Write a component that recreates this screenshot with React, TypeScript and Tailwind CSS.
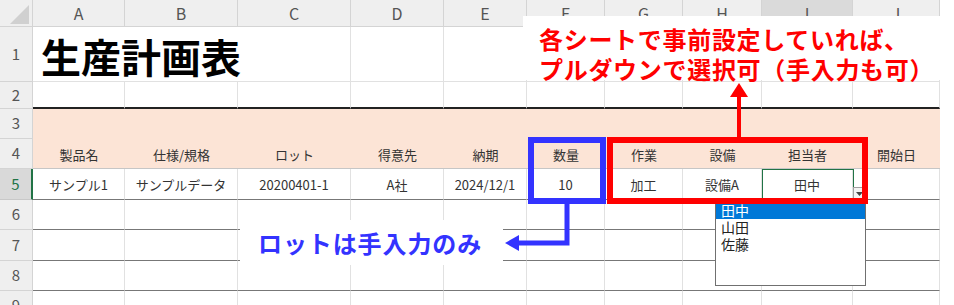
import React from "react";

const widths = [
  "w-[92px]",
  "w-[113px]",
  "w-[113px]",
  "w-[93px]",
  "w-[83px]",
  "w-[78px]",
  "w-[78px]",
  "w-[79px]",
  "w-[91px]",
  "w-[87px]",
];
const letters = ["A", "B", "C", "D", "E", "F", "G", "H", "I", "J"];
const headers = ["製品名", "仕様/規格", "ロット", "得意先", "納期", "数量", "作業", "設備", "担当者", "開始日"];
const values = ["サンプル1", "サンプルデータ", "20200401-1", "A社", "2024/12/1", "10", "加工", "設備A", "田中", ""];

function RowHead({ label, active = false }: { label: string; active?: boolean }) {
  if (active) {
    return (
      <div className="w-[33px] shrink-0 flex items-center justify-center bg-[#d9d9d9] text-[#217346] text-[15px] border-b border-b-[#c8c8c8] border-r-2 border-r-[#217346]">
        {label}
      </div>
    );
  }
  return (
    <div className="w-[33px] shrink-0 flex items-center justify-center bg-[#efefef] text-[#555] text-[15px] border-b border-r border-[#d4d4d4]">
      {label}
    </div>
  );
}

function GridRow({ h, label, line = "border-b-[#e1e1e1]", active = false }: { h: string; label: string; line?: string; active?: boolean }) {
  return (
    <div className={`flex ${h}`}>
      <RowHead label={label} active={active} />
      {widths.map((w, i) => (
        <div key={i} className={`${w} shrink-0 border-r border-r-[#e1e1e1] border-b ${line}`} />
      ))}
    </div>
  );
}

export default function App() {
  return (
    <div className="w-[954px] h-[305px] overflow-hidden bg-white font-['Noto_Sans_CJK_JP','Noto_Sans',sans-serif]">
      <div className="relative w-[940px]">
        {/* column letters */}
        <div className="flex h-[27px]">
          <div className="w-[33px] shrink-0 bg-[#efefef] border-r border-b border-[#d4d4d4] flex items-end justify-end">
            <svg width="24" height="23" viewBox="0 0 24 23">
              <polygon points="2,21 21,21 21,2" fill="#d0d0d0" />
            </svg>
          </div>
          {widths.map((w, i) => (
            <div
              key={i}
              className={`${w} shrink-0 flex items-center justify-center text-[16px] text-[#555] border-r border-b border-[#d4d4d4] ${
                i === 8 ? "bg-[#dadada]" : "bg-[#efefef]"
              }`}
            >
              {letters[i]}
            </div>
          ))}
        </div>

        {/* row 1: title */}
        <div className="flex h-[55px]">
          <RowHead label="1" />
          <div className="w-[318px] shrink-0 flex items-center pl-[8px] pt-[4px] border-r border-b border-[#e1e1e1] text-[40px] font-bold leading-none text-black">
            生産計画表
          </div>
          {widths.slice(3).map((w, i) => (
            <div key={i} className={`${w} shrink-0 border-r border-b border-[#e1e1e1]`} />
          ))}
        </div>

        {/* row 2 */}
        <div className="flex h-[27px]">
          <RowHead label="2" />
          {widths.map((w, i) => (
            <div key={i} className={`${w} shrink-0 border-r border-r-[#e1e1e1] border-b-2 border-b-[#222]`} />
          ))}
        </div>

        {/* row 3 */}
        <div className="flex h-[30px]">
          <RowHead label="3" />
          <div className="flex-1 bg-[#fce4d6]" />
        </div>

        {/* row 4: headers */}
        <div className="flex h-[30px]">
          <RowHead label="4" />
          {widths.map((w, i) => (
            <div
              key={i}
              className={`${w} shrink-0 flex items-center justify-center pt-[2px] bg-[#fce4d6] border-b border-[#c6c6c6] text-[13px] text-[#333]`}
            >
              {headers[i]}
            </div>
          ))}
        </div>

        {/* row 5: data */}
        <div className="flex h-[31px]">
          <RowHead label="5" active />
          {widths.map((w, i) => (
            <div
              key={i}
              className={`${w} shrink-0 flex items-center justify-center pt-[2px] border-r border-r-[#e1e1e1] border-b border-b-[#777] text-[13px] text-[#333]`}
            >
              {values[i]}
            </div>
          ))}
        </div>

        <GridRow h="h-[30px]" label="6" line="border-b-[#777]" />
        <GridRow h="h-[31px]" label="7" line="border-b-[#777]" />
        <GridRow h="h-[30px]" label="8" line="border-b-[#777]" />
        <GridRow h="h-[30px]" label="9" />

        {/* selected cell */}
        <div className="absolute left-[762px] top-[169px] w-[92px] h-[31px] border border-[#217346]" />
        <div className="absolute left-[853px] top-[187px] w-[13px] h-[13px] bg-[#f3f3f3] border border-[#a0a0a0] flex items-center justify-center">
          <svg width="7" height="4" viewBox="0 0 7 4">
            <polygon points="0,0 7,0 3.5,4" fill="#444" />
          </svg>
        </div>

        {/* dropdown list */}
        <div className="absolute left-[715px] top-[201px] w-[151px] h-[85px] bg-white border border-[#707070] text-[14px] leading-[17px] text-[#222]">
          <div className="px-[5px] bg-[#0078d7] text-white">田中</div>
          <div className="px-[5px]">山田</div>
          <div className="px-[5px]">佐藤</div>
        </div>

        {/* highlight boxes */}
        <div className="absolute left-[528px] top-[137px] w-[78px] h-[67px] border-[6px] border-[#3333ff]" />
        <div className="absolute left-[607px] top-[137px] w-[261px] h-[67px] border-[6px] border-[#ff0000]" />

        {/* red callout */}
        <div className="absolute left-[523px] top-[16px] w-[417px] h-[64px] bg-white pl-[16px] pt-[8px] text-[24px] leading-[30px] font-bold tracking-[0.7px] text-[#ff0000] whitespace-nowrap">
          <div>各シートで事前設定していれば、</div>
          <div>プルダウンで選択可（手入力も可）</div>
        </div>
        <svg className="absolute left-[726px] top-[80px]" width="26" height="60" viewBox="0 0 26 60">
          <line x1="13" y1="14" x2="13" y2="58" stroke="#ff0000" strokeWidth="4" />
          <polygon points="13,3 4,17 22,17" fill="#ff0000" />
        </svg>

        {/* blue callout */}
        <div className="absolute left-[240px] top-[220px] w-[263px] h-[45px] bg-white pl-[18px] flex items-center text-[24px] font-bold tracking-[0.9px] text-[#3333ff] whitespace-nowrap">
          ロットは手入力のみ
        </div>
        <svg className="absolute left-[500px] top-[200px]" width="75" height="55" viewBox="0 0 75 55">
          <path d="M67 4 V43 H17" fill="none" stroke="#3333ff" strokeWidth="5" />
          <polygon points="5,43 19,35 19,51" fill="#3333ff" />
        </svg>
      </div>
    </div>
  );
}
